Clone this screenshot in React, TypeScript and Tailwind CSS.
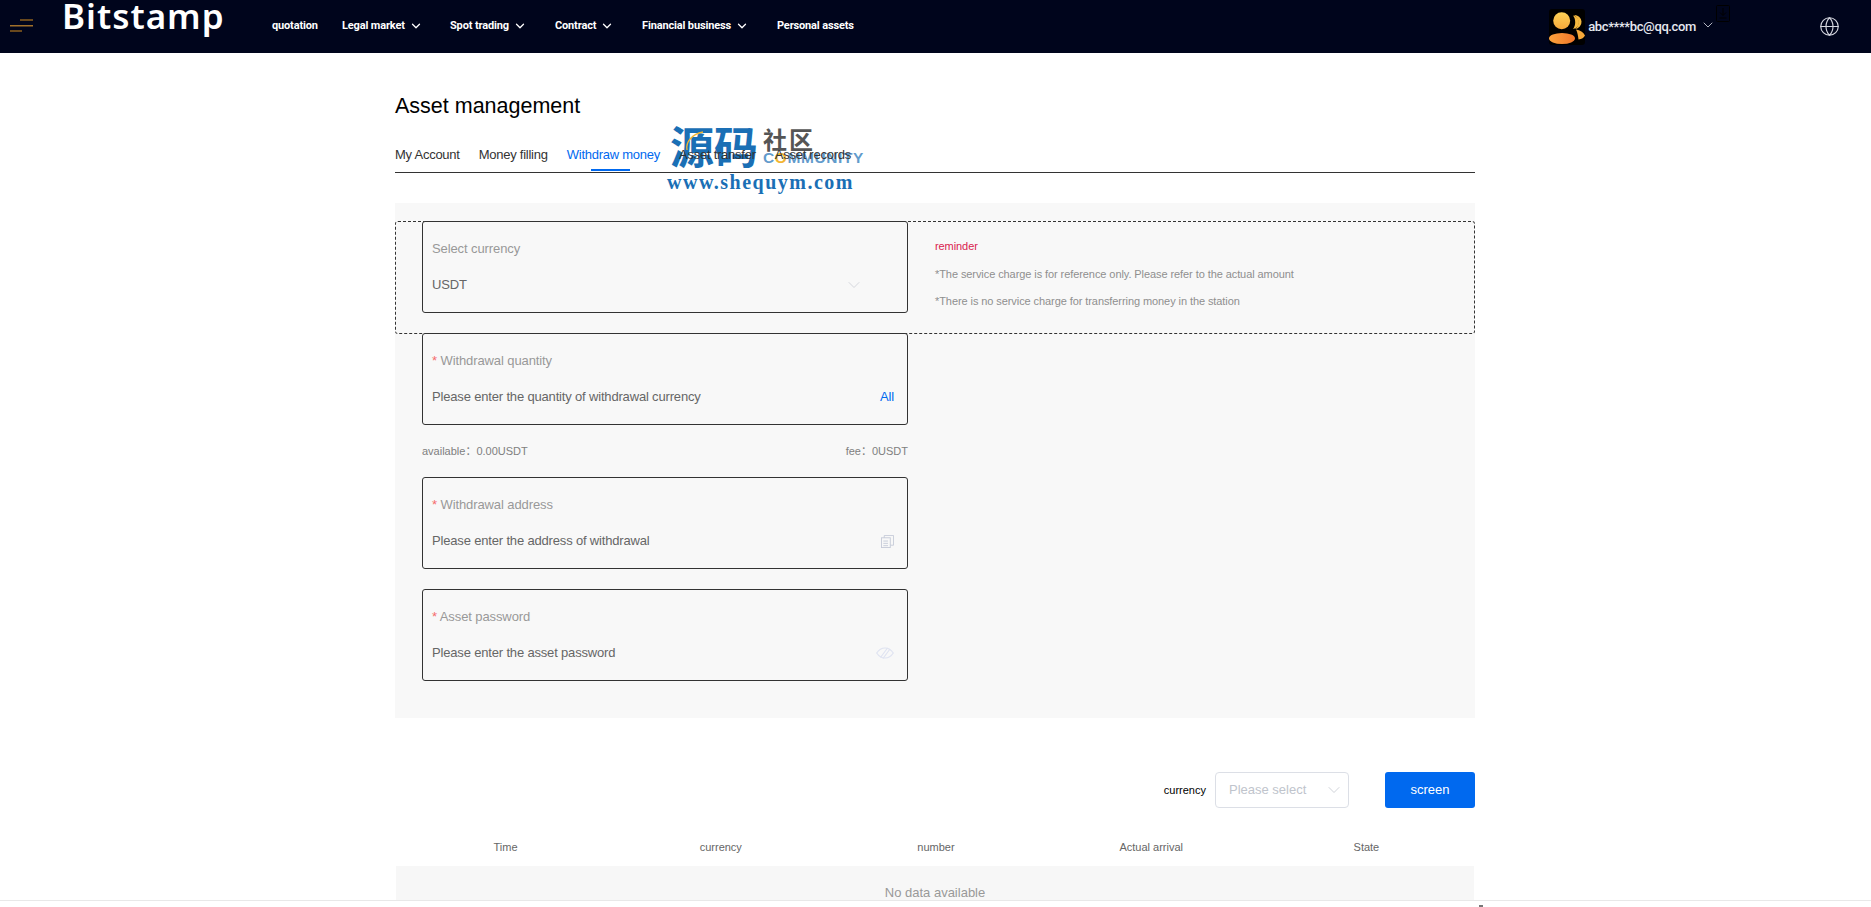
import { ChevronDown, Globe } from 'lucide-react';

const navItems = [
  { label: 'quotation', arrow: false, cls: 'w-[70px]' },
  { label: 'Legal market', arrow: true, cls: 'w-[108px]' },
  { label: 'Spot trading', arrow: true, cls: 'w-[105px]' },
  { label: 'Contract', arrow: true, cls: 'w-[87px]' },
  { label: 'Financial business', arrow: true, cls: 'w-[135px]' },
  { label: 'Personal assets', arrow: false, cls: '' },
];

const tabs = ['My Account', 'Money filling', 'Withdraw money', 'Asset transfer', 'Asset records'];
const columns = ['Time', 'currency', 'number', 'Actual arrival', 'State'];

const Avatar = () => (
  <svg viewBox="0 0 36 36" className="w-9 h-9 shrink-0">
    <defs>
      <linearGradient id="av1" x1="0" y1="0" x2="0" y2="1">
        <stop offset="0" stopColor="#fdd257" />
        <stop offset="1" stopColor="#f7a93a" />
      </linearGradient>
      <linearGradient id="av2" x1="0" y1="0" x2="1" y2="0">
        <stop offset="0" stopColor="#fca33c" />
        <stop offset="1" stopColor="#f0762a" />
      </linearGradient>
    </defs>
    <rect width="36" height="36" rx="3" fill="#000" />
    <path d="M24 6a7 7 0 0 1 1 14c2.500-2 3.500-4 3.500-7S26.500 8 24 6z" transform="translate(1 0)" fill="#f5b93f" />
    <path d="M24 6.500a6.800 6.800 0 0 1 0 13.500c1.500-2 2.200-4.200 2.200-6.800S25.500 8.500 24 6.500z" fill="#f5b93f" />
    <circle cx="12.700" cy="11.700" r="8.500" fill="url(#av1)" />
    <path d="M27 20.500c4 .5 7.500 3 9 6-1.200 2.500-3 3.500-6.500 4-.5-4-1-7-2.500-10z" fill="#f5a83a" />
    <ellipse cx="13" cy="29.500" rx="13" ry="5.500" fill="url(#av2)" />
  </svg>
);

const Field = ({ label, required, placeholder, right }: { label: string; required?: boolean; placeholder: string; right?: React.ReactNode }) => (
  <div className="w-[486px] h-[92px] border border-[#333] rounded-[3px] px-[9px] pt-[17px] flex flex-col shrink-0 bg-[#f8f8f8]">
    <div className="text-[13px] leading-5 text-[#999] tracking-[-0.1px]">
      {required && <span className="text-[#f56c6c]">* </span>}
      {label}
    </div>
    <div className="mt-4 flex items-center justify-between pr-[4px] text-[13px] leading-5 text-[#666] tracking-[-0.17px]">
      <span>{placeholder}</span>
      {right}
    </div>
  </div>
);

export default function App() {
  return (
    <div className="relative h-[907px] overflow-hidden bg-white font-['Liberation_Sans','Noto_Sans_CJK_SC',Arial,sans-serif]">
      {/* Header */}
      <header className="h-[53px] bg-[#00051c] flex items-start text-white">
        <svg viewBox="0 0 24 14" className="w-6 h-[14px] ml-[10px] mt-[19px] shrink-0">
          <rect x="10" y="0.500" width="13" height="1" fill="#d08c1e" />
          <rect x="0" y="6" width="23" height="1.500" fill="#a0702a" />
          <rect x="0" y="11.500" width="12" height="1" fill="#d08c1e" />
        </svg>
        <div className="ml-[28px] w-[210px] shrink-0 text-[35px] leading-[32px] font-['Noto_Sans',sans-serif] font-semibold tracking-[1px]">
          Bitstamp
        </div>
        <nav className="flex items-center h-[52px] text-[11px] font-bold tracking-[-0.15px] font-['Roboto',sans-serif]">
          {navItems.map((item) => (
            <div key={item.label} className={`flex items-center gap-[4px] ${item.cls}`}>
              <span>{item.label}</span>
              {item.arrow && <ChevronDown className="w-[14px] h-[14px]" strokeWidth={2.200} />}
            </div>
          ))}
        </nav>
        <div className="ml-auto flex items-center h-[53px]">
          <Avatar />
          <span className="ml-[3px] text-[13px] font-medium tracking-[-0.37px] font-['Roboto',sans-serif] text-[#e6e8f0]">abc****bc@qq.com</span>
          <div className="relative ml-[4px] -mt-1">
            <ChevronDown className="w-4 h-4 text-[#cfd2dc]" strokeWidth={1.300} />
            <svg viewBox="0 0 14 17" className="absolute left-[16px] top-[-12px] w-[14px] h-[17px]" fill="none" stroke="#000" strokeWidth="1">
              <rect x="0.500" y="0.500" width="13" height="16" rx="1" />
              <path d="M7 3v7M4 7.500 7 10.500l3-3M3.500 13h7" />
            </svg>
          </div>
          <Globe className="ml-[103px] mr-[31px] w-[21px] h-[21px] text-[#d5d7e0]" strokeWidth={1.300} />
        </div>
      </header>

      {/* Content */}
      <main className="w-[1080px] ml-[395px]">
        <h1 className="mt-[40px] text-[21.500px] leading-[26px] text-black">Asset management</h1>
        <div className="mt-[17px] h-[37px] pt-[7px] border-b border-[#333] flex gap-[19px] text-[13px] leading-[24px] tracking-[-0.25px] text-[#333]">
          {tabs.map((tab, i) => (
            <div key={tab} className={`relative z-10 ${i === 2 ? 'text-[#0069ef]' : ''}`}>
              {tab}
              {i === 2 && <div className="absolute left-[24px] w-[39px] h-[2px] top-[26px] bg-[#0069ef]" />}
            </div>
          ))}
        </div>

        <section className="mt-[30px] h-[515px] bg-[#f8f8f8] pt-[18px]">
          <div className="h-[113px] border border-dashed border-[#333] rounded-[3px] flex pl-[26px]">
            <div className="-mt-px">
              <Field
                label="Select currency"
                placeholder="USDT"
                right={<ChevronDown className="mr-[30px] w-5 h-5 text-[#c9ccd4]" strokeWidth={0.900} />}
              />
            </div>
            <div className="ml-[27px] pt-[11px] text-[11px] leading-[27.500px] text-[#8f8f8f] tracking-[-0.08px]">
              <div className="text-[#d9234f]">reminder</div>
              <div>*The service charge is for reference only. Please refer to the actual amount</div>
              <div>*There is no service charge for transferring money in the station</div>
            </div>
          </div>
          <div className="pl-[27px] -mt-px">
            <Field
              label="Withdrawal quantity"
              required
              placeholder="Please enter the quantity of withdrawal currency"
              right={<span className="text-[#0069ef]">All</span>}
            />
            <div className="w-[486px] h-[52px] flex items-center justify-between text-[11px] text-[#808080]">
              <span>available：0.00USDT</span>
              <span>fee：0USDT</span>
            </div>
            <Field
              label="Withdrawal address"
              required
              placeholder="Please enter the address of withdrawal"
              right={
                <svg viewBox="0 0 14 14" className="w-[13px] h-[13px] text-[#c6cbd8]" fill="none" stroke="currentColor" strokeWidth="1">
                  <rect x="0.500" y="3" width="9.500" height="10.500" />
                  <path d="M3.500 3V.5h10v10.500H10M2.500 6.500h5M2.500 9h5M2.500 11.500h5" />
                </svg>
              }
            />
            <div className="h-[20px]" />
            <Field
              label="Asset password"
              required
              placeholder="Please enter the asset password"
              right={
                <svg viewBox="0 0 18 12" className="w-[18px] h-3 text-[#dfe3f1]" fill="none" stroke="currentColor" strokeWidth="1.200">
                  <path d="M.7 6C3 2.500 6 1 9 1s6 1.500 8.300 5C15 9.500 12 11 9 11S3 9.500.7 6z" />
                  <path d="M4.500 10.500 11.500 1M7 11.500 14 2" />
                </svg>
              }
            />
          </div>
        </section>

        {/* Filter */}
        <div className="mt-[54px] flex items-center justify-end h-9">
          <span className="text-[11px] text-black">currency</span>
          <div className="ml-[9px] w-[134px] h-9 border border-[#dcdfe6] rounded-[4px] pl-[13px] pr-[4px] flex items-center justify-between text-[13px] text-[#c0c4cc]">
            <span>Please select</span>
            <ChevronDown className="w-5 h-5" strokeWidth={0.900} />
          </div>
          <button className="ml-[36px] w-[90px] h-9 rounded-[3px] bg-[#0069ef] text-white text-[13px]">screen</button>
        </div>

        {/* Table */}
        <div className="mt-[21px] pl-[3px] pr-px">
          <div className="h-[37px] grid grid-cols-5 items-center text-center text-[11px] text-[#666]">
            {columns.map((col) => (
              <div key={col}>{col}</div>
            ))}
          </div>
        </div>
        <div className="mx-px h-[60px] bg-[#f7f7f7] pt-[17px] text-center text-[13px] leading-5 text-[#999]">No data available</div>
      </main>

      {/* Bottom bar */}
      <div className="absolute left-0 right-0 bottom-0 h-[7px] bg-white border-t border-[#e8e8e8]">
        <div className="absolute left-[1479px] top-[4px] w-[4px] h-[2px] bg-[#777]" />
      </div>

      {/* Watermark */}
      <div className="absolute left-[667px] top-[123px] w-[200px] h-[70px] pointer-events-none">
        <div className="absolute left-[3px] top-0 text-[44px] leading-[44px] font-bold text-[#1a6fb5] font-['Noto_Sans_CJK_SC',sans-serif]">源码</div>
        <svg viewBox="0 0 20 20" className="absolute left-[18px] top-[8px] w-5 h-5" fill="none" stroke="#f2b632" strokeWidth="1.300">
          <path d="M2 19C.5 11 7 3 18 1" />
        </svg>
        <div className="absolute left-[96px] top-[3px] text-[24px] leading-[26px] font-bold text-[#555] tracking-[2px] font-['Noto_Sans_CJK_SC',sans-serif]">社区</div>
        <div className="absolute left-[96px] top-[27px] text-[15.500px] leading-[16px] font-bold text-[#1a6fb5]/70 tracking-[0.6px]">
          C<span className="text-[#f2b632]">O</span>MMUNITY
        </div>
        <div className="absolute left-0 top-[49px] text-[20px] leading-[20px] font-bold text-[#1a6fb5] tracking-[1.500px] font-['Liberation_Serif',serif]">www.shequym.com</div>
      </div>
    </div>
  );
}
